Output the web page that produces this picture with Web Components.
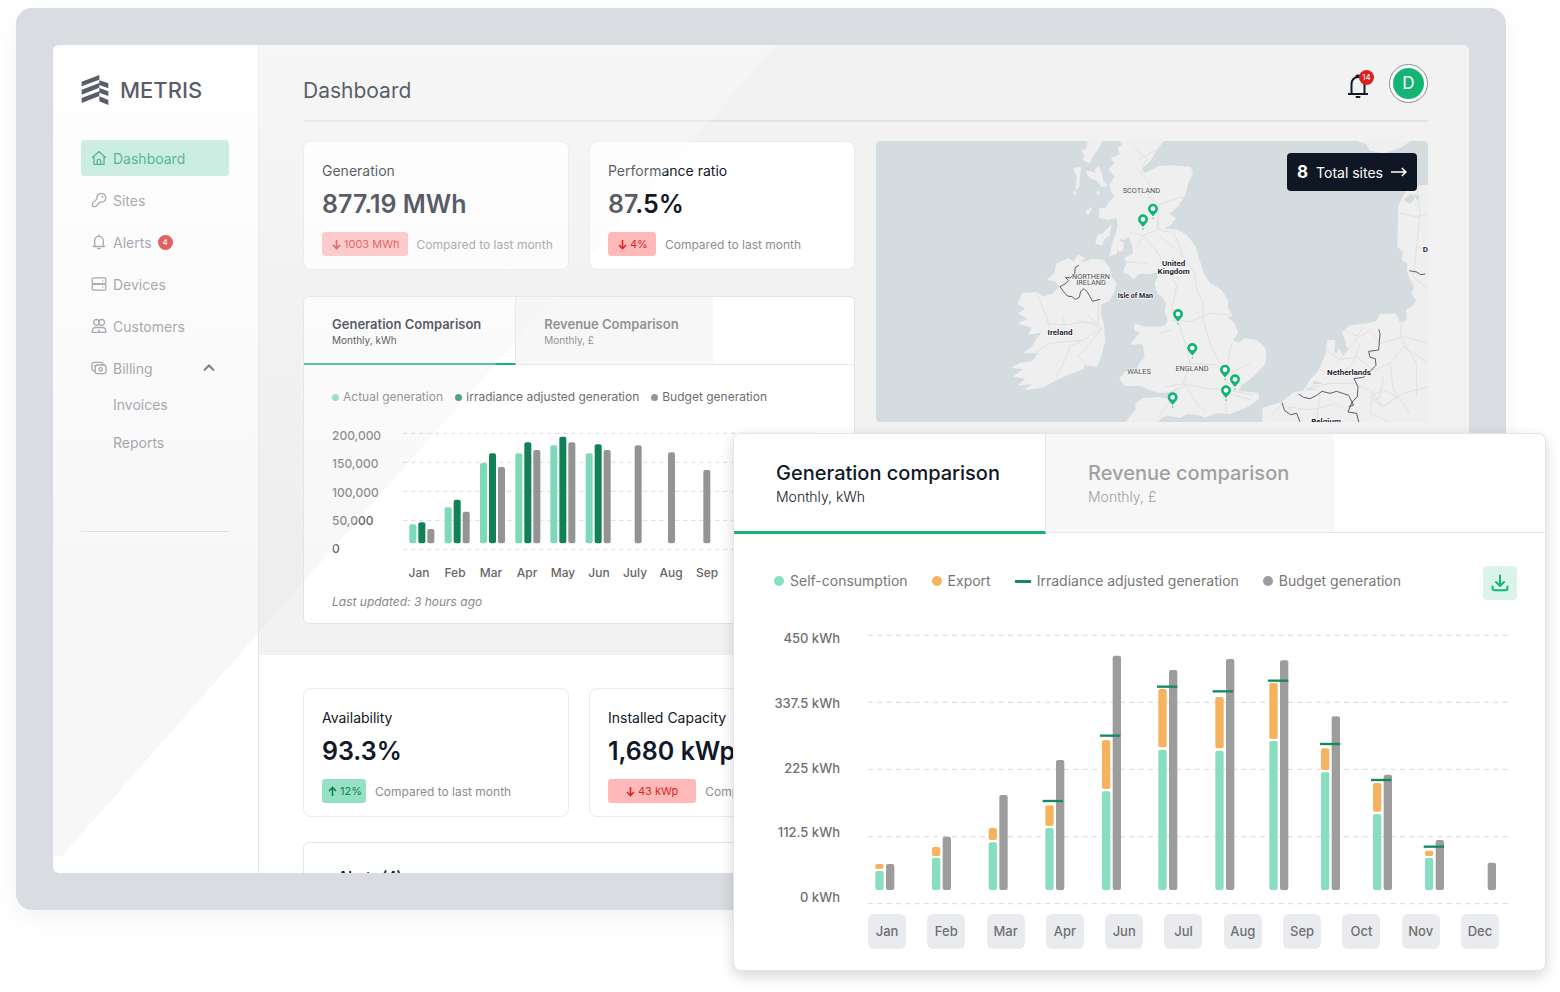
<!DOCTYPE html>
<html lang="en">
<head>
    <meta charset="UTF-8">
    <meta name="viewport" content="width=device-width, initial-scale=1.0">
    <title>Metris Dashboard</title>
    <style>
        body {
            margin: 0;
            background: #fff;
            font-family: Inter, "Liberation Sans", sans-serif;
            color: #111827;
        }

        .stage {
            position: relative;
            padding: 8px 54px 82px 16px;
        }

        .cards {
            display: grid;
            grid-template-columns: repeat(2, minmax(0, 1fr));
            gap: 20px;
        }

        .columns {
            display: grid;
            grid-template-columns: repeat(2, minmax(0, 1fr));
            align-items: start;
            gap: 21px;
        }

        .stack {
            display: grid;
            gap: 26px;
        }

        /* the enlarged chart card lies over the device frame */
        .floating {
            position: absolute;
            top: 433px;
            right: 14px;
            width: 813px;
            z-index: 5;
        }
    </style>
</head>
<body>
<div class="stage">
    <metris-device>
        <metris-sidebar slot="sidebar">
            <metris-nav-item icon="home" active>Dashboard</metris-nav-item>
            <metris-nav-item icon="key">Sites</metris-nav-item>
            <metris-nav-item icon="bell" count="4">Alerts</metris-nav-item>
            <metris-nav-item icon="server">Devices</metris-nav-item>
            <metris-nav-item icon="users">Customers</metris-nav-item>
            <metris-nav-item icon="cash" open>Billing
                <metris-sub-item slot="sub">Invoices</metris-sub-item>
                <metris-sub-item slot="sub">Reports</metris-sub-item>
            </metris-nav-item>
        </metris-sidebar>

        <metris-header slot="top" alerts="14" initial="D">Dashboard</metris-header>
        <div slot="top" class="columns">
            <div class="stack">
                <div class="cards">
                    <metris-stat-card label="Generation" value="877.19 MWh" change="1003 MWh" trend="down"></metris-stat-card>
                    <metris-stat-card label="Performance ratio" value="87.5%" change="4%" trend="down"></metris-stat-card>
                </div>
                <metris-tab-card>
                    <metris-tab slot="tabs" active sub="Monthly, kWh">Generation Comparison</metris-tab>
                    <metris-tab slot="tabs" sub="Monthly, £">Revenue Comparison</metris-tab>
                    <metris-month-chart></metris-month-chart>
                </metris-tab-card>
            </div>
            <metris-site-map total="8"></metris-site-map>
        </div>

        <div class="columns">
            <div class="cards">
                <metris-stat-card label="Availability" value="93.3%" change="12%" trend="up"></metris-stat-card>
                <metris-stat-card label="Installed Capacity" value="1,680 kWp" change="43 kWp" trend="down" wide></metris-stat-card>
            </div>
        </div>
        <metris-alerts-card>Alerts (4)</metris-alerts-card>
    </metris-device>

    <metris-tab-card class="floating" large>
        <metris-tab slot="tabs" active large sub="Monthly, kWh">Generation comparison</metris-tab>
        <metris-tab slot="tabs" large sub="Monthly, £">Revenue comparison</metris-tab>
        <metris-energy-chart></metris-energy-chart>
    </metris-tab-card>
</div>

<script>
    const BASE = `
        *, *::before, *::after { box-sizing: border-box; }
        :host { display: block; box-sizing: border-box; }
        button { font: inherit; color: inherit; border: 0; margin: 0; padding: 0; background: none; cursor: pointer; }
        a { color: inherit; text-decoration: none; }
        svg { display: block; }
    `;

    const ICONS = {
        home: '<path d="M1.5 7.5 8 1.6l6.500 5.900M3 6.500v7.800h10V6.500M6.300 14.300v-3.300a1.700 1.700 0 0 1 3.400 0v3.300"/>',
        key: '<path d="M10.200 1.400a4.400 4.400 0 1 1-1.100 8.600L4.900 14.200a1.300 1.300 0 0 1-.9.4H2.200a.8.8 0 0 1-.8-.8V12a1.300 1.300 0 0 1 .4-.9l4.200-4.200a4.400 4.400 0 0 1 4.200-5.500zM10.800 4.400a1.300 1.300 0 0 1 1 1"/>',
        bell: '<path d="M8 1v1M3.700 11.500V6.600a4.300 4.300 0 0 1 8.600 0v4.900l1.500 1H2.200zM6.600 14.600h2.800"/>',
        server: '<rect x="1.200" y="1.800" width="13.600" height="6.200" rx="1.500"/><rect x="1.200" y="8" width="13.600" height="6.200" rx="1.500"/><path d="M11.800 5h.1M11.800 11h.1"/>',
        users: '<circle cx="5.400" cy="4.400" r="2.900"/><circle cx="10.600" cy="4.400" r="2.900"/><path d="M1.300 14.400v-1.600a3.300 3.300 0 0 1 3.300-3.300h6.800a3.300 3.300 0 0 1 3.300 3.300v1.600zM8 14.400V12"/>',
        cash: '<rect x="4.200" y="5" width="10.800" height="8.600" rx="2"/><circle cx="9.600" cy="9.300" r="1.700"/><path d="M4.200 10.800H2.800A1.800 1.800 0 0 1 1 9V4.200a1.800 1.800 0 0 1 1.800-1.800h7.400A1.800 1.800 0 0 1 12 4.200V5M4 5.800H3.500"/>'
    };

    function icon(name, size = 16) {
        return `<svg width="${size}" height="${size}" viewBox="0 0 16 16" fill="none" stroke="currentColor" stroke-width="1.300" stroke-linecap="round" stroke-linejoin="round" aria-hidden="true">${ICONS[name]}</svg>`;
    }

    // Shadow root with the shared base rules; subclasses only return their own markup
    class MetrisElement extends HTMLElement {
        connectedCallback() {
            if (this.shadowRoot) return;
            this.attachShadow({mode: 'open'});
            this.shadowRoot.innerHTML = `<style>${BASE}</style>` + this.render();
        }

        attr(name) {
            return this.getAttribute(name) || '';
        }
    }

    class MetrisDevice extends MetrisElement {
        render() {
            return `
                <style>
                    :host {
                        padding: 37px;
                        background: #d9dde2;
                        border-radius: 16px;
                        box-shadow: 0 8px 24px rgba(0, 0, 0, .05);
                    }
                    .screen {
                        position: relative;
                        display: flex;
                        aspect-ratio: 1416 / 828;
                        overflow: hidden;
                        background: #fff;
                        border-radius: 6px;
                    }
                    main { flex: 1; min-width: 0; }
                    .top { background: #f2f2f2; padding: 0 41px 31px 44px; }
                    .bottom { display: grid; gap: 25px; padding: 33px 41px 0 44px; }
                    .glare {
                        position: absolute;
                        inset: 0;
                        z-index: 1;
                        pointer-events: none;
                        background: linear-gradient(rgba(255, 255, 255, .3), rgba(228, 228, 228, .3) 65%);
                        clip-path: polygon(0 0, 51.1% 0, .6% 98%, 0 98%);
                    }
                </style>
                <div class="screen">
                    <slot name="sidebar"></slot>
                    <main>
                        <section class="top"><slot name="top"></slot></section>
                        <section class="bottom"><slot></slot></section>
                    </main>
                    <div class="glare"></div>
                </div>
            `;
        }
    }

    class MetrisSidebar extends MetrisElement {
        render() {
            return `
                <style>
                    :host {
                        flex: none;
                        width: 206px;
                        padding: 30px 29px 0 28px;
                        border-right: 1px solid #e5e5e7;
                    }
                    .logo { display: flex; align-items: center; gap: 11px; height: 30px; font-size: 22px; font-weight: 500; color: #111827; }
                    nav { display: grid; gap: 6px; margin-top: 35px; padding-bottom: 72px; border-bottom: 1px solid #dedfe1; }
                </style>
                <div class="logo">
                    <svg width="28" height="30" viewBox="0 0 82 90" fill="currentColor" aria-hidden="true">
                        <path d="M1 20 54 0V14L1 34zM54 16l27 9v15l-27-10zM1 44 54 24v14L1 59zM54 39l27 10v14L54 53zM1 69 54 49v14L1 84zM54 64l27 11v15L54 79z"/>
                    </svg>
                    <span>METRIS</span>
                </div>
                <nav><slot></slot></nav>
            `;
        }
    }

    class MetrisNavItem extends MetrisElement {
        render() {
            const chevron = this.hasAttribute('open')
                ? '<svg class="chevron" width="12" height="8" viewBox="0 0 12 8" fill="none" stroke="#4b505b" stroke-width="2"><path d="M1 6.500 6 1.500l5 5"/></svg>' : '';
            const count = this.attr('count') ? `<b>${this.attr('count')}</b>` : '';
            return `
                <style>
                    a {
                        display: flex;
                        align-items: center;
                        gap: 6px;
                        height: 36px;
                        padding: 0 14px 0 10px;
                        border-radius: 4px;
                        font-size: 14px;
                        color: #858993;
                    }
                    :host([active]) a { background: #b7e8d7; color: #12965f; }
                    b {
                        width: 15px;
                        border-radius: 50%;
                        background: #dc1f1f;
                        color: #fff;
                        font-size: 8px;
                        font-weight: 500;
                        line-height: 15px;
                        text-align: center;
                    }
                    .chevron { margin-left: auto; }
                    .sub { display: grid; gap: 6px; margin-top: 3px; }
                    :host(:not([open])) .sub { display: none; }
                </style>
                <a href="#">${icon(this.attr('icon'))}<slot></slot>${count}${chevron}</a>
                <div class="sub"><slot name="sub"></slot></div>
            `;
        }
    }

    class MetrisSubItem extends MetrisElement {
        render() {
            return `
                <style>
                    a { display: block; padding-left: 32px; font-size: 14px; line-height: 32px; color: #858993; }
                </style>
                <a href="#"><slot></slot></a>
            `;
        }
    }

    class MetrisHeader extends MetrisElement {
        render() {
            return `
                <style>
                    :host {
                        display: flex;
                        align-items: center;
                        height: 77px;
                        margin-bottom: 19px;
                        padding-top: 2px;
                        border-bottom: 2px solid #e3e3e3;
                    }
                    h1 { flex: 1; margin: 14px 0 0; font-size: 21px; font-weight: 400; line-height: 28px; }
                    .alerts { position: relative; margin: 4px 20px 0 0; }
                    .alerts b {
                        position: absolute;
                        top: -3px;
                        right: -5px;
                        width: 15px;
                        border-radius: 50%;
                        background: #dc1f1f;
                        color: #fff;
                        font-size: 8px;
                        font-weight: 400;
                        line-height: 15px;
                    }
                    .avatar {
                        width: 39px;
                        height: 39px;
                        padding: 3px;
                        border: 1px solid #8d8d8d;
                        border-radius: 50%;
                        background: #fff;
                    }
                    .avatar span { display: block; border-radius: 50%; background: #14b574; color: #fff; font-size: 17px; line-height: 31px; }
                </style>
                <h1><slot></slot></h1>
                <button class="alerts" aria-label="Alerts">
                    <svg width="22" height="26" viewBox="0 0 22 26" fill="none" stroke="#111827" stroke-width="2" aria-hidden="true">
                        <path d="M4.500 20.500V11a6.500 7 0 0 1 13 0v9.500M1 21h20M9 3.500c1-1.200 3-1.200 4 0" /><path d="M9.500 24h3" stroke-linecap="round"/>
                    </svg>
                    <b>${this.attr('alerts')}</b>
                </button>
                <button class="avatar" aria-label="Account"><span>${this.attr('initial')}</span></button>
            `;
        }
    }

    class MetrisStatCard extends MetrisElement {
        render() {
            const arrow = this.attr('trend') === 'up' ? 'M4.500 10V1.500M1 5l3.500-3.500L8 5' : 'M4.500 1v8.500M1 6l3.500 3.500L8 6';
            return `
                <style>
                    :host {
                        height: 129px;
                        padding: 19px 18px;
                        background: #fff;
                        border: 1px solid #e9eaee;
                        border-radius: 8px;
                        white-space: nowrap;
                    }
                    .label { font-size: 14px; line-height: 20px; }
                    .value { margin: 7px 0 12px; font-size: 25px; font-weight: 600; line-height: 32px; }
                    .change { display: flex; align-items: center; gap: 9px; }
                    .pill {
                        display: flex;
                        align-items: center;
                        gap: 3px;
                        height: 24px;
                        padding: 0 8px 0 10px;
                        border-radius: 3px;
                        background: #ffb9b9;
                        color: #dc2626;
                        font-size: 11px;
                    }
                    :host([trend="up"]) .pill { padding: 0 4px 0 6px; background: #96e0c4; color: #118052; }
                    :host([wide]) .pill { padding: 0 18px; }
                    .note { font-size: 12px; color: #8c8c8c; }
                </style>
                <div class="label">${this.attr('label')}</div>
                <div class="value">${this.attr('value')}</div>
                <div class="change">
                    <span class="pill">
                        <svg width="9" height="11" viewBox="0 0 9 11" fill="none" stroke="currentColor" stroke-width="1.600" aria-hidden="true"><path d="${arrow}"/></svg>
                        ${this.attr('change')}
                    </span>
                    <span class="note">Compared to last month</span>
                </div>
            `;
        }
    }

    class MetrisTabCard extends MetrisElement {
        render() {
            return `
                <style>
                    :host { background: #fff; border: 1px solid #e4e4e6; border-radius: 6px; }
                    :host([large]) { border-radius: 8px; box-shadow: 0 5px 14px rgba(0, 0, 0, .16); }
                    .tabs { display: flex; height: 68px; border-bottom: 1px solid #e6e6e6; }
                    :host([large]) .tabs { height: 99px; }
                </style>
                <div class="tabs" role="tablist"><slot name="tabs"></slot></div>
                <slot></slot>
            `;
        }
    }

    class MetrisTab extends MetrisElement {
        render() {
            return `
                <style>
                    button {
                        height: 67px;
                        padding: 0 34px 0 28px;
                        background: #f7f7f7;
                        color: #929292;
                        text-align: left;
                        white-space: nowrap;
                    }
                    strong { display: block; font-size: 13px; font-weight: 600; line-height: 18px; }
                    small { display: block; font-size: 10px; line-height: 14px; }
                    :host([active]) button {
                        height: 68px;
                        padding-top: 1px;
                        background: #fff;
                        color: #111827;
                        border-right: 1px solid #e4e4e6;
                        border-bottom: 2px solid #14b574;
                        border-top-left-radius: 6px;
                    }
                    :host([large]) button { height: 98px; padding: 0 45px 0 42px; color: #a0a0a0; }
                    :host([large]) strong { font-size: 20px; font-weight: 500; line-height: 28px; }
                    :host([large]) small { font-size: 14px; font-weight: 300; line-height: 20px; }
                    :host([large][active]) button { height: 100px; padding-top: 1px; color: #111827; border-bottom-width: 3px; }
                </style>
                <button role="tab" aria-selected="${this.hasAttribute('active')}">
                    <strong><slot></slot></strong>
                    <small>${this.attr('sub')}</small>
                </button>
            `;
        }
    }

    class MetrisLegend extends MetrisElement {
        render() {
            return `
                <style>
                    :host { display: flex; align-items: center; gap: 4px; font-size: 12px; line-height: 18px; color: #6e6e6e; white-space: nowrap; }
                    i { width: 7px; height: 7px; border-radius: 50%; background: ${this.attr('color')}; }
                    :host([large]) { gap: 6px; margin-bottom: 4px; font-size: 14px; color: #777; }
                    :host([large]) i { width: 10px; height: 10px; }
                    :host([line]) i { width: 16px; height: 3px; border-radius: 0; }
                </style>
                <i></i><slot></slot>
            `;
        }
    }

    // Plot coordinates are in thirds of a pixel
    function bar(x, top, bottom, width, fill) {
        return `<rect x="${x}" y="${top}" width="${width}" height="${bottom - top}" rx="6" fill="${fill}"/>`;
    }

    function gridLines(x1, x2, ys, dash) {
        return ys.map(y => `<path d="M${x1} ${y}H${x2}" stroke="#d6d8dc" stroke-width="3" stroke-dasharray="${dash}"/>`).join('');
    }

    class MetrisMonthChart extends MetrisElement {
        render() {
            const months = ['Jan', 'Feb', 'Mar', 'Apr', 'May', 'Jun', 'July', 'Aug', 'Sep'];
            // x of the group, then tops of actual, irradiance adjusted and budget
            const groups = [
                [328, 493, 487, 507], [434, 442, 419, 455], [540, 309, 280, 321],
                [646, 280, 247, 270], [751, 256, 230, 247], [857, 280, 253, 270]
            ];
            const budgetOnly = [[1004, 256], [1104, 277], [1210, 330]];
            let bars = '';
            for (const [x, a, b, c] of groups) {
                bars += bar(x, a, 550, 21, '#7dd9b8') + bar(x + 27, b, 550, 21, '#128256') + bar(x + 54, c, 550, 21, '#949494');
            }
            for (const [x, top] of budgetOnly) bars += bar(x, top, 550, 21, '#949494');
            return `
                <style>
                    :host { padding: 23px 28px 12px; }
                    .legend { display: flex; gap: 12px; }
                    .chart { display: grid; grid-template-columns: 69px 1fr; margin-top: 22px; font-size: 12px; font-weight: 500; line-height: 16px; color: #666; }
                    .y { display: flex; flex-direction: column; justify-content: space-between; height: 129px; }
                    .plot { position: relative; z-index: 2; width: 100%; height: 129px; }
                    .x { grid-column: 2; display: grid; grid-template-columns: repeat(9, 36px); margin-top: 8px; text-align: center; }
                    em { display: block; margin-top: 12px; font-size: 12px; line-height: 18px; color: #888; }
                </style>
                <div class="legend">
                    <metris-legend color="#7dd9b8">Actual generation</metris-legend>
                    <metris-legend color="#128256">Irradiance adjusted generation</metris-legend>
                    <metris-legend color="#949494">Budget generation</metris-legend>
                </div>
                <div class="chart">
                    <div class="y"><span>200,000</span><span>150,000</span><span>100,000</span><span>50,000</span><span>0</span></div>
                    <svg class="plot" viewBox="303 204 1260 387" preserveAspectRatio="xMinYMid meet" aria-hidden="true">
                        ${gridLines(310, 1560, [220, 307, 394, 481, 568], '12 12')}${bars}
                    </svg>
                    <div class="x">${months.map(m => `<span>${m}</span>`).join('')}</div>
                </div>
                <em>Last updated: 3 hours ago</em>
            `;
        }
    }

    class MetrisEnergyChart extends MetrisElement {
        render() {
            const months = ['Jan', 'Feb', 'Mar', 'Apr', 'Jun', 'Jul', 'Aug', 'Sep', 'Oct', 'Nov', 'Dec'];
            // x, self-consumption top, export top, export bottom, budget top
            const groups = [
                [436, 783, 762, 777, 762], [606, 743, 711, 738, 680], [776, 697, 654, 690, 555],
                [946, 654, 586, 648, 450], [1116, 544, 390, 537, 137], [1285, 419, 237, 412, 180],
                [1456, 422, 261, 415, 147], [1618, 393, 219, 387, 151], [1773, 487, 415, 480, 319],
                [1929, 612, 519, 605, 494], [2085, 743, 722, 738, 690]
            ];
            const irradiance = [[938, 573], [1110, 377], [1281, 230], [1448, 244], [1614, 212], [1770, 402], [1923, 510], [2081, 710]];
            let bars = '';
            for (const [x, self, top, bottom, budget] of groups) {
                bars += bar(x, self, 840, 25, '#88dfbf') + bar(x, top, bottom, 25, '#f5b25f') + bar(x + 32, budget, 840, 25, '#9d9d9d');
            }
            bars += bar(2273, 758, 840, 25, '#9d9d9d');
            const marks = irradiance.map(([x, y]) => `<path d="M${x} ${y}h61" stroke="#128a5c" stroke-width="7"/>`).join('');
            return `
                <style>
                    :host { padding: 33px 28px 21px 40px; }
                    .legend { display: flex; align-items: center; gap: 24px; }
                    button {
                        display: grid;
                        place-items: center;
                        width: 34px;
                        height: 34px;
                        margin-left: auto;
                        border-radius: 4px;
                        background: #daf4ea;
                    }
                    .chart { display: grid; grid-template-columns: 66px 1fr; column-gap: 28px; margin-top: 29px; font-size: 13px; font-weight: 500; line-height: 18px; color: #707070; }
                    .y { display: flex; flex-direction: column; align-items: flex-end; justify-content: space-between; height: 277px; white-space: nowrap; }
                    .plot { width: 100%; height: 277px; }
                    .x { grid-column: 2; display: flex; justify-content: space-between; margin: 8px 18px 0 0; }
                    .x span { width: 38px; border-radius: 6px; background: #eaebef; line-height: 35px; text-align: center; }
                </style>
                <div class="legend">
                    <metris-legend large color="#88dfbf">Self-consumption</metris-legend>
                    <metris-legend large color="#f5b25f">Export</metris-legend>
                    <metris-legend large line color="#128a5c">Irradiance adjusted generation</metris-legend>
                    <metris-legend large color="#9d9d9d">Budget generation</metris-legend>
                    <button aria-label="Download">
                        <svg width="18" height="18" viewBox="0 0 18 18" fill="none" stroke="#14b574" stroke-width="2" stroke-linecap="round" stroke-linejoin="round" aria-hidden="true">
                            <path d="M9 1.500v10M5 8l4 4 4-4M1.500 12.500v1.700a2 2 0 0 0 2 2h11a2 2 0 0 0 2-2v-1.700"/>
                        </svg>
                    </button>
                </div>
                <div class="chart">
                    <div class="y"><span>450 kWh</span><span>337.5 kWh</span><span>225 kWh</span><span>112.5 kWh</span><span>0 kWh</span></div>
                    <svg class="plot" viewBox="414 57 1944 831" preserveAspectRatio="xMinYMid meet" aria-hidden="true">
                        ${gridLines(414, 2344, [76, 277, 478, 680, 881], '15 13')}${bars}${marks}
                    </svg>
                    <div class="x">${months.map(m => `<span>${m}</span>`).join('')}</div>
                </div>
            `;
        }
    }

    class MetrisSiteMap extends MetrisElement {
        render() {
            const sites = [[849, 237], [819, 269], [924, 553], [967, 655], [1065, 720], [1095, 749], [1068, 782], [908, 803]];
            const pins = sites.map(([x, y]) => `
                <g transform="translate(${x} ${y})">
                    <path d="M0-16a15 15 0 0 1 15 15C15 8 5 15 0 22-5 15-15 8-15-1A15 15 0 0 1 0-16z" fill="#14b574"/>
                    <circle r="7" cy="-1" fill="#fff"/><circle r="2" cy="28" fill="#14b574"/>
                </g>`).join('');
            return `
                <style>
                    :host { position: relative; overflow: hidden; border-radius: 4px; background: #d4dcdf; }
                    .map { width: 100%; height: auto; font-family: Roboto, "Liberation Sans", sans-serif; font-size: 24px; text-anchor: middle; }
                    .land { fill: #efefef; stroke: #efefef; stroke-width: 4; stroke-linejoin: round; }
                    .road { fill: none; stroke: #e0e1e1; stroke-width: 3; stroke-linejoin: round; }
                    .border { fill: none; stroke: #5c5f62; stroke-width: 3; stroke-linejoin: round; }
                    .country { font-weight: 700; fill: #1c2230; stroke: #fff; stroke-width: 4; paint-order: stroke; }
                    .region { font-size: 22px; fill: #4d5158; stroke: #f4f4f4; stroke-width: 3; paint-order: stroke; }
                    button {
                        position: absolute;
                        top: 12px;
                        right: 11px;
                        display: flex;
                        align-items: center;
                        gap: 8px;
                        height: 38px;
                        padding: 0 10px;
                        border-radius: 4px;
                        background: #101724;
                        color: #fff;
                        font-size: 14px;
                    }
                    b { font-size: 17px; font-weight: 700; }
                </style>
                <svg class="map" viewBox="18 33 1656 843" role="img" aria-label="Map of sites">
                    <g class="land">
                        <path d="M750 33 760 45 745 55 752 73 725 85 737 100 718 118 737 140 720 165 727 188 737 200 718 217 705 240 688 262 725 265 742 262 745 290 730 335 720 377 738 370 752 320 760 328 777 318 790 350 790 372 765 385 772 400 760 425 778 432 792 446 805 430 840 430 862 425 865 442 855 462 864 490 880 502 890 520 886 545 896 572 885 588 870 592 825 592 795 583 795 600 812 606 800 622 784 642 820 640 826 682 810 700 800 722 775 718 750 745 765 766 812 766 838 778 870 787 900 785 925 770 940 765 912 788 890 808 868 803 820 806 797 822 800 838 782 860 768 880H860L875 860 895 855 930 862 950 850 980 852 1005 860 1040 848 1080 850 1130 830 1165 806 1163 790 1102 785 1112 765 1140 745 1165 722 1183 702 1187 675 1184 655 1160 632 1125 627 1105 640 1085 632 1102 610 1092 580 1068 560 1085 557 1070 530 1075 515 1052 480 1018 460 1000 430 985 385 975 350 948 315 915 298 872 298 900 285 915 265 895 252 925 225 945 192 952 160 967 130 960 112 900 108 868 110 820 133 816 115 838 95 855 65 878 33z"/>
                        <path d="M625 375 643 385 625 398 650 395 670 388 700 392 716 412 722 440 737 460 730 490 715 512 692 522 690 548 700 585 703 632 692 680 680 708 640 704 640 715 600 730 560 748 520 770 468 778 492 760 447 764 472 745 433 738 464 716 428 712 452 700 488 695 508 668 465 668 488 650 502 625 520 605 478 612 488 592 448 580 476 567 448 550 470 535 445 520 458 490 500 488 520 502 550 492 570 470 556 452 534 448 556 430 560 402 596 386 612 398z"/>
                        <path d="M655 33h40l-14 28-12 12-10 26-18-10 4-14-8-12 14-8zM612 116l20-4-4 22-2 36-8 8 4-40zM650 125l20 2 12 10-6-18 10-8 8 20 4 20 12 16-14 2-16-20-20-6zM690 235l22 4 12 18-6 12-28-8zM678 340l6-24 16-4 22-24-4 26-18 14-4 16zM748 335l12 4-2 22-10 2-6-14zM648 244l16-10-10 20zM682 186l5 0v6h-5zM612 186h4v6h-4z"/>
                        <path d="M1466 33 1490 40 1500 60 1540 68 1590 52 1618 33zM1676 165 1640 170 1612 178 1596 210 1586 230 1584 350 1600 362 1598 390 1615 400 1612 420 1618 440 1634 470 1626 490 1640 512 1628 530 1610 540 1612 570 1595 580 1575 552 1530 555 1520 575 1494 582 1440 588 1418 608 1432 640 1408 655 1400 675 1390 665 1395 632 1374 632 1368 675 1345 725 1322 750 1300 785 1272 788 1235 818 1180 835 1178 880H1676z"/>
                    </g>
                    <g fill="#d4dcdf">
                        <path d="M1600 210l24-20 12 14-16 18zM1630 192l20 6-8 14zM1403 650l20-10 12 18-16 16zM1330 752l30 8-30 4zM1310 775l36 2-36 4zM1588 562l8 12-10 2zM838 95l-12 14 4 14 14-14z"/>
                    </g>
                    <g class="road">
                        <path d="M790 55 830 85 812 130 838 155 835 200 868 225 860 300 820 316 780 308M865 250 866 300 900 306M820 316 868 375 876 385M800 90 860 60M820 316 800 350M862 225 940 200M910 300 940 380 975 430 980 480 1000 520 1000 570M895 420 920 470 905 540 930 590 945 640 960 700 940 760M905 570 960 575 1020 550 1080 555M1000 570 1020 640 1050 700 1070 760M870 610 905 600M960 700 1040 705 1065 740 1100 720 1140 700M885 770 940 762 1010 775 1070 780 1150 795M940 765 900 815 865 860M945 765 980 820 1010 850M1065 785 1070 845M1065 785 1140 810M1085 640 1075 690 1065 740M870 320 910 350 940 380M760 395 830 400"/>
                        <path d="M685 510V580L640 575 590 585 525 580M690 590 620 570M700 590 640 630 600 650 580 700 560 740M640 630 540 640 500 665M695 595 660 640 625 680 650 705M500 488 530 560 540 600M650 550 690 590M575 555 585 585"/>
                        <path d="M1640 170 1650 250 1640 350 1676 360M1590 250 1640 260 1676 250M1640 350 1630 440 1676 480M1420 600 1470 620 1500 600 1530 640 1600 620 1676 640M1370 660 1410 690 1460 680 1510 720 1560 700 1600 650 1676 700M1350 720 1400 740 1450 700 1470 640M1310 775 1380 760 1450 760 1500 780 1540 830 1600 790 1676 770M1250 830 1320 840 1400 820 1440 850M1510 780 1500 850 1560 876M1200 860 1240 820 1300 870M1540 740 1530 800 1500 820M1560 700 1570 780 1620 850M1600 540 1590 620 1640 700 1640 800M1340 876 1350 790M1480 590 1450 640 1400 700M1500 800 1540 780 1580 800 1540 830z"/>
                    </g>
                    <g class="border">
                        <path d="M627 406 616 412 614 432 600 444 586 442 596 452 588 460 570 470 580 484 592 498 606 500 616 508 628 502 632 484 642 476 652 486 660 500 668 514 690 508"/>
                        <path d="M1526 598 1530 610 1526 660 1496 664 1500 682 1516 686 1518 706 1500 724 1480 742 1452 746 1464 770 1462 800 1446 816 1436 796 1400 784 1380 790 1356 784 1340 796 1320 806 1300 802 1286 792M1446 816 1434 846 1460 850 1466 876M1446 816 1450 826 1436 830M1236 818 1244 842 1262 854 1280 850 1290 876M1618 422 1640 426 1652 434 1666 432"/>
                    </g>
                    <g class="region">
                        <text x="814" y="189">SCOTLAND</text>
                        <text x="663" y="446">NORTHERN</text><text x="663" y="465">IRELAND</text>
                        <text x="807" y="732">WALES</text><text x="966" y="723">ENGLAND</text>
                    </g>
                    <g class="country">
                        <text x="911" y="409">United</text><text x="911" y="433">Kingdom</text>
                        <text x="796" y="503" font-size="21">Isle of Man</text>
                        <text x="570" y="615">Ireland</text>
                        <text x="1437" y="735">Netherlands</text>
                        <text x="1368" y="882">Belgium</text><text x="1666" y="367">D</text>
                    </g>
                    ${pins}
                </svg>
                <button>
                    <b>${this.attr('total')}</b><span>Total sites</span>
                    <svg width="16" height="10" viewBox="0 0 16 10" fill="none" stroke="currentColor" stroke-width="1.600" aria-hidden="true"><path d="M0 5h14.500M10.800 1l4 4-4 4"/></svg>
                </button>
            `;
        }
    }

    class MetrisAlertsCard extends MetrisElement {
        render() {
            return `
                <style>
                    :host { padding: 23px 34px; border: 1px solid #e4e4e6; border-radius: 6px; }
                    h2 { margin: 0; font-size: 14px; font-weight: 600; line-height: 22px; }
                </style>
                <h2><slot></slot></h2>
            `;
        }
    }

    customElements.define('metris-device', MetrisDevice);
    customElements.define('metris-sidebar', MetrisSidebar);
    customElements.define('metris-nav-item', MetrisNavItem);
    customElements.define('metris-sub-item', MetrisSubItem);
    customElements.define('metris-header', MetrisHeader);
    customElements.define('metris-stat-card', MetrisStatCard);
    customElements.define('metris-tab-card', MetrisTabCard);
    customElements.define('metris-tab', MetrisTab);
    customElements.define('metris-legend', MetrisLegend);
    customElements.define('metris-month-chart', MetrisMonthChart);
    customElements.define('metris-energy-chart', MetrisEnergyChart);
    customElements.define('metris-site-map', MetrisSiteMap);
    customElements.define('metris-alerts-card', MetrisAlertsCard);
</script>
</body>
</html>
